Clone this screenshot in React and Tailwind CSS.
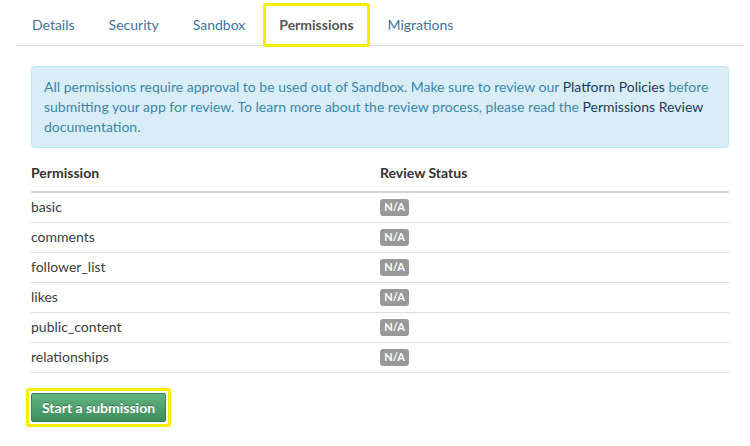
import React from 'react';

const tabs = ['Details', 'Security', 'Sandbox', 'Permissions', 'Migrations'];
const permissions = ['basic', 'comments', 'follower_list', 'likes', 'public_content', 'relationships'];

export default function App() {
  return (
    <div className="w-[750px] h-[446px] bg-white text-[#333] font-['Lato',sans-serif] text-[14px] overflow-hidden">
      <ul className="ml-[16px] mr-[6px] h-[46px] flex gap-[2px] border-b border-[#dddddd]">
        {tabs.map((tab) => {
          const active = tab === 'Permissions';
          return (
            <li key={tab} className="relative h-full flex items-center px-[16px] pt-[3px]">
              <span className={active ? 'font-bold text-[#555]' : 'text-[#3f729b]'}>{tab}</span>
              {active && (
                <span className="absolute left-0 right-0 top-[3px] -bottom-[2px] border-[3px] border-[#f7ee00] rounded-[2px]" />
              )}
            </li>
          );
        })}
      </ul>

      <div className="ml-[31px] w-[698px]">
        <div className="mt-[20px] rounded-[4px] border border-[#bce8f1] bg-[#d9edf7] px-[12px] py-[10px] text-[#3a87ad] leading-[20px]">
          All permissions require approval to be used out of Sandbox. Make sure to review our{' '}
          <span className="text-[#1d3a5c]">Platform Policies</span> before submitting your app for review. To learn more
          about the review process, please read the <span className="text-[#1d3a5c]">Permissions Review</span>{' '}
          documentation.
        </div>

        <div className="mt-[15px]">
          <div className="grid grid-cols-2 border-b-2 border-[#d4d4d4] pb-[8px] leading-[20px] font-bold text-[#333]">
            <div>Permission</div>
            <div>Review Status</div>
          </div>
          {permissions.map((p) => (
            <div key={p} className="grid grid-cols-2 h-[30px] pb-[2px] items-center border-b border-[#dddddd] text-[#3d3d3d]">
              <div>{p}</div>
              <div className="flex pt-[1px]">
                <span className="inline-flex items-center justify-center w-[29px] h-[17px] rounded-[3px] bg-[#999] text-white text-[11px] font-bold">
                  N/A
                </span>
              </div>
            </div>
          ))}
        </div>

        <div className="mt-[15px] -ml-[5px] inline-block border-[3px] border-[#f7ee00] rounded-[2px] p-[2px]">
          <button className="h-[29px] px-[10px] rounded-[2px] border border-[#3b8052] bg-gradient-to-b from-[#63b482] to-[#3f8e5d] text-white font-bold text-[14px] [text-shadow:0_-1px_0_rgba(0,0,0,0.3)]">
            Start a submission
          </button>
        </div>
      </div>
    </div>
  );
}
